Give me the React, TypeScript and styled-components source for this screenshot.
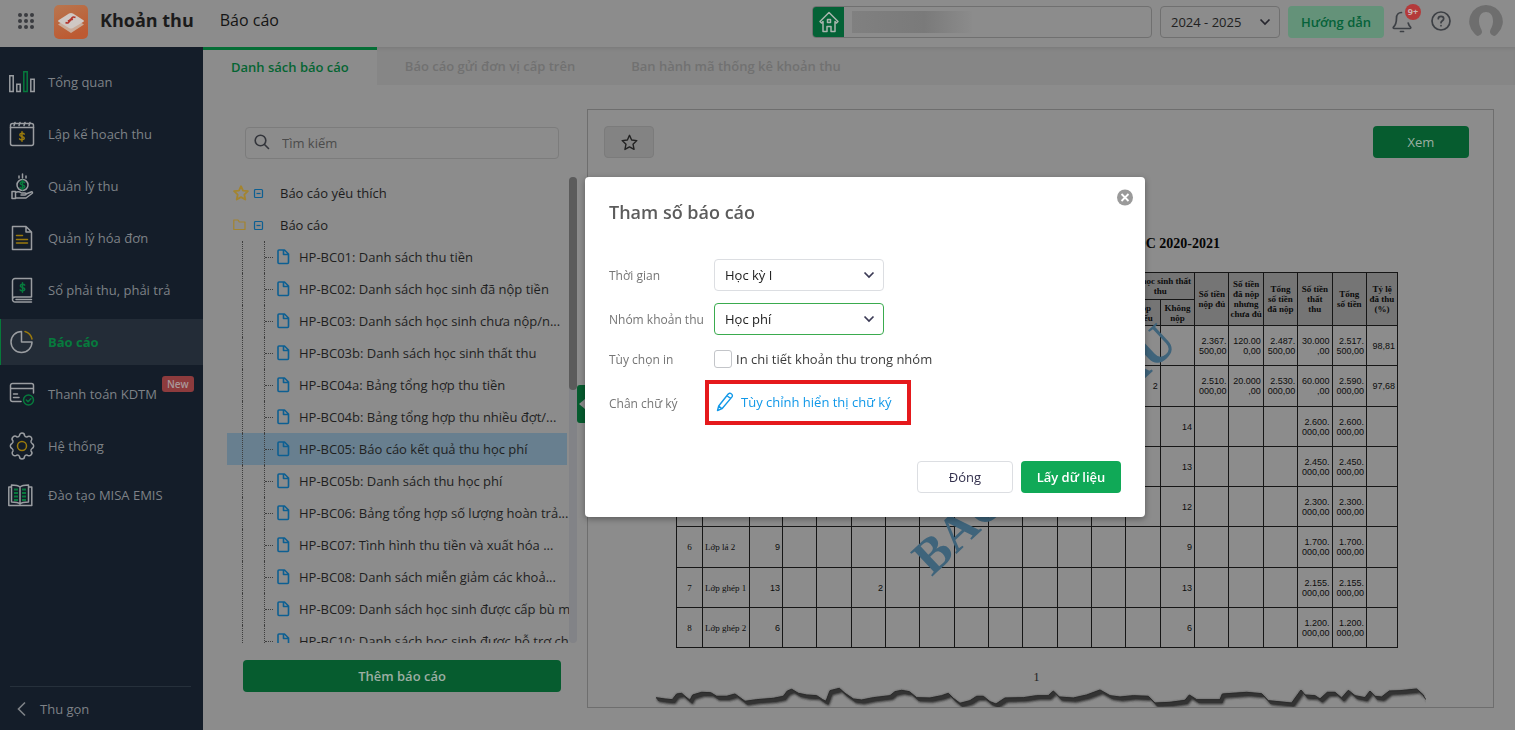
import React from "react";
import styled, { createGlobalStyle, css } from "styled-components";

const GlobalStyle = createGlobalStyle`
  *, *::before, *::after { box-sizing: border-box; }
  body {
    margin: 0;
    background: #8c8c8c;
    font-family: "Open Sans", "Noto Sans", sans-serif;
    font-size: 13px;
    line-height: 20px;
    color: #1c1c1c;
  }
  button, input, select { font: inherit; color: inherit; }
  button { cursor: pointer; }
  ul { list-style: none; margin: 0; padding: 0; }
  svg { display: block; flex: none; }
`;

const Shell = styled.div`
  display: flex;
  flex-direction: column;
  height: 100vh;
  min-height: 640px;
`;

/* ---------- top bar ---------- */

const TopBar = styled.header`
  display: flex;
  align-items: center;
  flex: none;
  height: 47px;
  padding: 0 12px 4px 18px;
  background: #8c8c8c;
`;

const AppsButton = styled.button`
  display: flex;
  padding: 0 0 2px;
  border: 0;
  background: none;
  color: #3a3c40;
  margin-right: 20px;
`;

const AppName = styled.strong`
  margin-left: 12px;
  padding-bottom: 3px;
  font-size: 18px;
  font-weight: 700;
  color: #1b1b1b;
`;

const PageName = styled.h1`
  flex: 1;
  margin: 0 0 0 26px;
  padding-bottom: 3px;
  font-size: 16px;
  font-weight: 400;
  color: #141414;
`;

const SchoolBox = styled.div`
  display: flex;
  align-items: center;
  width: 340px;
  height: 32px;
  border: 1px solid #707070;
  border-radius: 4px;
  overflow: hidden;
`;

const SchoolMark = styled.span`
  display: grid;
  place-items: center;
  width: 31px;
  height: 100%;
  background: #046236;
  color: #a9b5ae;
`;

const SchoolName = styled.span`
  width: 120px;
  height: 22px;
  margin-left: 8px;
  background: linear-gradient(90deg, #808080, #7a7a7a 60%, #858585 85%, #8b8b8b);
`;

const SelectWrap = styled.span<{ $width: number }>`
  position: relative;
  display: inline-flex;
  width: ${(p) => p.$width}px;

  svg {
    position: absolute;
    right: 9px;
    top: 11px;
    pointer-events: none;
  }
`;

const SelectBox = styled.select<{ $tone?: "dim" | "plain" | "focus" }>`
  appearance: none;
  width: 100%;
  height: 32px;
  padding: 0 28px 0 10px;
  border-radius: 4px;
  outline: none;
  color: #212121;
  background: ${(p) => (p.$tone === "dim" ? "transparent" : "#fff")};
  border: 1px solid
    ${(p) => (p.$tone === "dim" ? "#707070" : p.$tone === "focus" ? "#3aab4e" : "#dcdee2")};
`;

const YearSelect = styled(SelectWrap)`
  margin-left: 8px;
`;

const GuideButton = styled.button`
  width: 96px;
  height: 32px;
  margin: 0 8px;
  padding: 0;
  border: 0;
  border-radius: 4px;
  background: #649279;
  color: #06623a;
  font-weight: 600;
`;

const IconButton = styled.button`
  position: relative;
  display: flex;
  padding: 0;
  border: 0;
  background: none;
  color: #3d4045;
`;

const HelpButton = styled(IconButton)`
  margin: 0 18px 0 19px;
  padding-bottom: 2px;
`;

const Count = styled.span`
  position: absolute;
  top: -7px;
  left: 13px;
  width: 16px;
  height: 16px;
  border-radius: 50%;
  background: #b43a3a;
  color: #c9b4b4;
  font-size: 9px;
  font-weight: 700;
  line-height: 16px;
  text-align: center;
`;

/* ---------- side bar ---------- */

const Body = styled.div`
  display: flex;
  flex: 1;
  min-height: 0;
`;

const SideBar = styled.nav`
  display: flex;
  flex-direction: column;
  flex: none;
  width: 203px;
  background: #141d29;
`;

const MenuList = styled.ul`
  display: flex;
  flex-direction: column;
  gap: 6px;
  flex: 1;
  padding-top: 12px;
`;

const MenuLink = styled.a<{ $active?: boolean; $short?: boolean }>`
  display: flex;
  align-items: center;
  gap: 12px;
  height: ${(p) => (p.$short ? 40 : 46)}px;
  padding-left: 7px;
  border-left: 1px solid transparent;
  color: #7e8287;
  text-decoration: none;
  ${(p) =>
    p.$active &&
    css`
      background: #232c37;
      border-left-color: #067a3a;
      color: #077a3d;
      font-weight: 700;
    `}
`;

const NewTag = styled.span`
  align-self: flex-start;
  margin: 5px 0 0 -7px;
  padding: 0 5px;
  border-radius: 3px;
  background: #8d3b3d;
  color: #a9989a;
  font-size: 10px;
  font-weight: 600;
  line-height: 16px;
`;

const Collapse = styled.button`
  display: flex;
  align-items: center;
  gap: 10px;
  height: 44px;
  margin: 0 12px 0 10px;
  padding: 0 0 0 4px;
  border: 0;
  border-top: 1px solid #26303b;
  background: none;
  color: #7e8287;
  text-align: left;
`;

/* ---------- main ---------- */

const Main = styled.main`
  display: flex;
  flex-direction: column;
  flex: 1;
  min-width: 0;
`;

const Tabs = styled.div`
  display: flex;
  flex: none;
  height: 38px;
  background: #868686;
  box-shadow: inset 0 3px 3px -1px #7d7d7d;
`;

const Tab = styled.button<{ $active?: boolean }>`
  padding: 0 28px ${(p) => (p.$active ? 2 : 4)}px;
  border: 0;
  border-top: 3px solid ${(p) => (p.$active ? "#056e36" : "transparent")};
  background: ${(p) => (p.$active ? "#8c8c8c" : "none")};
  color: ${(p) => (p.$active ? "#056533" : "#717171")};
  font-weight: 600;
`;

const Content = styled.div`
  display: flex;
  flex: 1;
  min-height: 0;
  padding-right: 21px;
`;

const ReportNav = styled.section`
  position: relative;
  display: flex;
  flex-direction: column;
  flex: none;
  width: 384px;
  padding: 42px 10px 38px 24px;
`;

const Search = styled.label`
  display: flex;
  align-items: center;
  flex: none;
  gap: 10px;
  height: 32px;
  margin: 0 18px 18px;
  padding-left: 8px;
  border: 1px solid #7c7c7c;
  border-radius: 4px;
  color: #33353b;

  input {
    flex: 1;
    min-width: 0;
    border: 0;
    outline: none;
    background: none;
  }
  input::placeholder { color: #4b4b4b; opacity: 1; }
`;

const TreeScroll = styled.div`
  display: flex;
  flex: 1;
  min-height: 0;
`;

const TreeList = styled.ul`
  flex: 1;
  min-width: 0;
  overflow: hidden;
`;

const ScrollTrack = styled.div`
  width: 8px;
  background: #828387;
  border-radius: 4px;
`;

const ScrollThumb = styled.div`
  height: 213px;
  border-radius: 4px;
  background: #5b5b5b;
`;

const GroupRow = styled.li`
  display: flex;
  align-items: center;
  height: 32px;
  padding-left: 6px;

  svg + svg { margin: 0 16px 0 4px; }
`;

const ReportRow = styled.li<{ $selected?: boolean }>`
  display: flex;
  align-items: center;
  height: 32px;
  margin-right: 2px;
  padding-left: 15px;
  white-space: nowrap;
  background: ${(p) => (p.$selected ? "#687f8f" : "none")};
`;

const Guide = styled.span`
  flex: none;
  width: 22px;
  height: 32px;
  border-left: 1px dotted #3e3e3e;
`;

const Branch = styled(Guide)`
  display: flex;
  align-items: center;
  width: 13px;

  &::after {
    content: "";
    width: 8px;
    border-top: 1px dotted #3e3e3e;
  }
`;

const ReportLink = styled.a`
  margin-left: 9px;
  color: #1f1f1f;
  text-decoration: none;
`;

const GreenButton = styled.button<{ $width?: number; $bright?: boolean; $strong?: boolean }>`
  flex: none;
  width: ${(p) => (p.$width ? `${p.$width}px` : "auto")};
  height: 32px;
  padding: 0;
  border: 0;
  border-radius: 4px;
  background: ${(p) => (p.$bright ? "#10a957" : "#065c2f")};
  color: ${(p) => (p.$bright ? "#fff" : "#9caea3")};
  font-weight: ${(p) => (p.$strong ? 600 : 400)};
`;

const AddReport = styled(GreenButton)`
  margin: 17px 16px 0;
`;

const PanelToggle = styled.button`
  position: absolute;
  top: 300px;
  right: 0;
  display: grid;
  place-items: center;
  width: 10px;
  height: 38px;
  padding: 0;
  border: 0;
  border-radius: 3px 0 0 3px;
  background: #065c2f;
  color: #8c8c8c;
`;

/* ---------- report preview ---------- */

const Preview = styled.section`
  display: flex;
  flex-direction: column;
  flex: 1;
  min-width: 0;
  margin: 24px 0 22px;
  border: 1px solid #6e6e6e;
  overflow: hidden;
`;

const PreviewBar = styled.div`
  display: flex;
  justify-content: space-between;
  padding: 16px 24px 0 16px;
`;

const StarButton = styled.button`
  display: grid;
  place-items: center;
  width: 50px;
  height: 32px;
  padding: 0;
  border: 1px solid #7b7b7b;
  border-radius: 4px;
  background: #838383;
  color: #222;
`;

const Sheet = styled.div`
  display: flex;
  flex-direction: column;
  flex: 1;
  width: 771px;
  margin: 76px auto 0;
`;

const SheetTitle = styled.h2`
  width: 565px;
  margin: 0 0 18px;
  font-family: "Liberation Serif", serif;
  font-size: 14px;
  font-weight: 700;
  text-align: right;
  color: #050505;
`;

const TableArea = styled.div`
  position: relative;
  margin-left: 21px;
  width: 722px;
`;

const Table = styled.table`
  width: 722px;
  table-layout: fixed;
  border-collapse: collapse;
  color: #0c0c0c;
  font-size: 9px;
  line-height: 10px;

  th, td {
    padding: 0 2px;
    border: 1px solid #161616;
  }
  th {
    padding: 0;
    background: #757575;
    font-family: "Liberation Serif", serif;
    font-weight: 700;
  }
  thead tr { height: 26px; }
  thead tr:first-child { height: 27px; }
  tbody tr { height: 40px; }
  tbody tr:nth-child(4n + 2) { height: 41px; }
`;

const NumCell = styled.td`
  font-family: "Liberation Sans", sans-serif;
  text-align: right;
`;

const SerifCell = styled.td<{ $center?: boolean }>`
  font-family: "Liberation Serif", serif;
  text-align: ${(p) => (p.$center ? "center" : "left")};
  white-space: nowrap;
`;

const Watermark = styled.span`
  position: absolute;
  left: 51%;
  top: 47%;
  transform: translate(-50%, -50%) rotate(-43deg);
  font-family: "Liberation Serif", serif;
  font-size: 50px;
  font-weight: 700;
  line-height: 50px;
  white-space: nowrap;
  color: #3f647b;
`;

const PageNumber = styled.p`
  margin: auto 0 0;
  padding-right: 8px;
  font-family: "Liberation Serif", serif;
  font-size: 12px;
  line-height: 16px;
  text-align: center;
`;

/* ---------- dialog ---------- */

const DialogLayer = styled.div`
  position: fixed;
  inset: 0;
  display: flex;
  justify-content: center;
  align-items: flex-start;
  padding: 177px 0 0 215px;
`;

const Dialog = styled.div`
  position: relative;
  width: 560px;
  padding: 24px;
  border-radius: 4px;
  background: #fff;
  box-shadow: 0 2px 6px rgba(0, 0, 0, 0.35);
`;

const DialogTitle = styled.h2`
  margin: 0 0 36px;
  font-size: 18px;
  font-weight: 600;
  line-height: 22px;
  color: #5c5c5c;
`;

const CloseButton = styled.button`
  position: absolute;
  top: 12px;
  right: 12px;
  padding: 0;
  border: 0;
  background: none;
`;

const Form = styled.form`
  display: flex;
  flex-direction: column;
  gap: 12px;
`;

const Field = styled.div<{ $height: number }>`
  display: flex;
  align-items: center;
  height: ${(p) => p.$height}px;
`;

const FieldLabel = styled.label`
  flex: none;
  width: 105px;
  padding-top: 2px;
  font-size: 12px;
  color: #757575;
`;

const CheckLabel = styled.label`
  display: flex;
  align-items: center;
  gap: 4px;
  color: #3c3c3c;

  input {
    appearance: none;
    width: 18px;
    height: 18px;
    margin: 0;
    border: 1px solid #c3c5c9;
    border-radius: 3px;
    background: #fff;
  }
`;

const SignatureLink = styled.a`
  display: flex;
  align-items: center;
  gap: 7px;
  height: 45px;
  margin-left: -9px;
  padding: 0 15px 2px 7px;
  border: 4px solid #e5191c;
  color: #1198e8;
  text-decoration: none;
`;

const DialogFooter = styled.div`
  display: flex;
  justify-content: flex-end;
  gap: 8px;
  margin-top: 39px;
`;

const PlainButton = styled.button`
  width: 96px;
  height: 32px;
  padding: 0;
  border: 1px solid #dcdee2;
  border-radius: 4px;
  background: #fff;
  color: #33304d;
`;

/* ---------- icons ---------- */

const Chevron = ({ color = "#3b3a55" }: { color?: string }) => (
  <svg width="12" height="10" viewBox="0 0 12 10" fill="none" stroke={color} strokeWidth="1.700">
    <path d="M1.500 2.500 6 7l4.500-4.500" />
  </svg>
);

const LINE = "#9a9da1";
const GREEN = "#077a3d";
const GOLD = "#9a7a0c";

const MenuIcon = ({ children }: { children: React.ReactNode }) => (
  <svg width="28" height="28" viewBox="0 0 28 28" fill="none" stroke={LINE} strokeWidth="1.500" strokeLinecap="round" strokeLinejoin="round">
    {children}
  </svg>
);

const Coin = ({ x, y, color }: { x: number; y: number; color: string }) => (
  <path
    transform={`translate(${x} ${y})`}
    stroke={color}
    d="M2.200-2.300C1.500-3.600-2.200-3.500-2.200-1.600-2.200.3 2.300-.3 2.300 1.700 2.300 3.600-1.700 3.700-2.400 2.300M0-4.700V4.700"
  />
);

const icons = {
  overview: (
    <MenuIcon>
      <path strokeLinejoin="miter" d="M1.800 7.800h3.400v15.700H1.800zM8.800 16.300h3.400v7.200H8.800zM22.800 11.300h3.400v12.200h-3.400z" />
      <path stroke={GREEN} strokeLinejoin="miter" d="M15.800 3.800h3.400v19.700h-3.400z" />
    </MenuIcon>
  ),
  plan: (
    <MenuIcon>
      <rect x="2.500" y="3.500" width="23" height="22" rx="2" />
      <path d="M2.500 7.500h23M7 2.500l-1 3M12 2.500l-1 3M17 2.500l-1 3M22 2.500l-1 3" />
      <Coin x={14} y={16.500} color={GOLD} />
    </MenuIcon>
  ),
  collect: (
    <MenuIcon>
      <circle cx="14.500" cy="13" r="5.500" />
      <Coin x={14.500} y={13} color={GREEN} />
      <path d="M11 4v2M14.500 2v4M18 4v2M4 19.500h3.500v7H4zM7.500 20.500c3-1.500 4.500-.5 6 .5h3.500c1.500 0 1.500 2 0 2h-4M18 22l5-2c1.500-.5 2 .7 1 1.500L18 26H7.500" />
    </MenuIcon>
  ),
  invoice: (
    <MenuIcon>
      <path d="M4.500 2.500H18l5.500 5.500v17.500h-19zM18 2.500V8h5.500" />
      <path stroke={GOLD} d="M8.500 11.500h6M8.500 15.500h11M8.500 19h11" />
    </MenuIcon>
  ),
  ledger: (
    <MenuIcon>
      <path d="M4.500 22.500V5a2.500 2.500 0 0 1 2.500-2.500h16.500V21H7a2.500 2.500 0 0 0 0 5h16.500M8 23.500h15.500" />
      <Coin x={14.500} y={11.500} color={GREEN} />
    </MenuIcon>
  ),
  report: (
    <MenuIcon>
      <path d="M13.500 3.500A10.500 10.500 0 1 0 24 14H13.500z" />
      <path stroke={GOLD} d="M17 3.500A10 10 0 0 1 24 11" />
    </MenuIcon>
  ),
  payment: (
    <MenuIcon>
      <path d="M13 21.500H4.500a2 2 0 0 1-2-2v-14a2 2 0 0 1 2-2h19a2 2 0 0 1 2 2V13M2.500 8.500h23M5.500 14h4M5.500 17.500h5.500" />
      <circle cx="20.500" cy="20" r="5" stroke={GREEN} />
      <path stroke={GREEN} d="m18.300 20 1.700 1.700 2.900-2.900" />
    </MenuIcon>
  ),
  system: (
    <MenuIcon>
      <path d="M11.500 3.500a2.500 2.500 0 0 1 5 0 2.500 2.500 0 0 0 2.500 1.500 2.800 2.800 0 0 1 4 4 2.500 2.500 0 0 0 1 2.500 2.700 2.700 0 0 1 0 5 2.500 2.500 0 0 0-1 2.500 2.800 2.800 0 0 1-4 4 2.500 2.500 0 0 0-2.500 1.500 2.500 2.500 0 0 1-5 0A2.500 2.500 0 0 0 9 23a2.800 2.800 0 0 1-4-4 2.500 2.500 0 0 0-1-2.500 2.700 2.700 0 0 1 0-5A2.500 2.500 0 0 0 5 9a2.800 2.800 0 0 1 4-4 2.500 2.500 0 0 0 2.500-1.500z" />
      <circle cx="14" cy="14" r="4.500" stroke={GOLD} />
    </MenuIcon>
  ),
  training: (
    <MenuIcon>
      <path d="M12 6C10 4.200 6 4 3.500 4v17c3 0 6.500 0 8.500 2 2-2 5.500-2 8.500-2V4c-2.500 0-6.500.2-8.500 2zM12 6v17M3.500 6H.8v18.500h23V6h-3.300" />
      <path stroke={GREEN} strokeLinecap="butt" strokeWidth="2" d="M6 8.500h4M6 12h4M6 15.500h4M6 19h4M14 8.500h4M14 12h4M14 15.500h4M14 19h4" />
    </MenuIcon>
  ),
};

const AppsGrid = () => (
  <svg width="16" height="16" viewBox="0 0 16 16" fill="currentColor">
    {[2, 8, 14].map((y) => [2, 8, 14].map((x) => <circle key={`${x}-${y}`} cx={x} cy={y} r="2" />))}
  </svg>
);

const Logo = () => (
  <svg width="34" height="34" viewBox="0 0 34 34">
    <defs>
      <linearGradient id="logo" x1="0" y1="0" x2="0.400" y2="1">
        <stop offset="0" stopColor="#b8764f" />
        <stop offset="1" stopColor="#bd5a32" />
      </linearGradient>
    </defs>
    <rect width="34" height="34" rx="5" fill="url(#logo)" />
    <path d="M4 19.500 17 28l13-8.500-4-2.500H8z" fill="#c9ab99" />
    <path d="M4.500 15.200 15 8.500q2-1 4 0l10.500 6.700q1 .8 0 1.600L19 23q-2 1-4 0L4.500 16.800q-1-.8 0-1.600z" fill="#cfc8c4" />
    <path d="M11.500 17.500c2.500 1.200 3.500 0 4-1.500s1.500-2.500 3.500-1.500M21.500 12.500c-2.500-1.200-3.800 0-4.200 1.500s-1.500 2.500-3.500 1.500" fill="none" stroke="#b3342c" strokeWidth="1.600" />
  </svg>
);

const House = () => (
  <svg width="22" height="22" viewBox="0 0 22 22" fill="none" stroke="currentColor" strokeWidth="1.500" strokeLinejoin="round">
    <path d="M11 1.500 2 10.500l1.500 1.500L5 10.500v10h4v-5h4v5h4v-10l1.500 1.500 1.500-1.500z" />
    <rect x="9.500" y="8.500" width="3" height="3" />
  </svg>
);

const Bell = () => (
  <svg width="20" height="22" viewBox="0 0 20 22" fill="none" stroke="currentColor" strokeWidth="1.700" strokeLinecap="round" strokeLinejoin="round">
    <path d="M9.500 1.500C6.500 1.500 4.500 4 4.500 7c0 5.500-1.300 7.500-3 9-.5.500-.3 1.500.7 1.500h15.600c1 0 1.200-1 .7-1.500-1-1-1.800-2-2.300-4" />
    <path d="M8.500 20.500h3" />
  </svg>
);

const Help = () => (
  <svg width="20" height="20" viewBox="0 0 20 20" fill="none" stroke="currentColor" strokeWidth="1.700" strokeLinecap="round">
    <circle cx="10" cy="10" r="9" />
    <path d="M7.300 7.700C7.300 4.500 12.700 4.500 12.700 7.700c0 2-2.700 2-2.700 4M10 14.600v.1" />
  </svg>
);

const Avatar = () => (
  <svg width="34" height="34" viewBox="0 0 34 34" fill="#6e6e6e">
    <path d="M17 0a17 16.500 0 0 0-12 28c1.500 1.800 2.500 2.800 4 3 2-1 4-2 4-4 0-3-3-5-3-11 0-6 3-9 7-9s7 3 7 9c0 6-3 8-3 11 0 2 2 3 4 4 1.500-.2 2.500-1.200 4-3A17 16.500 0 0 0 17 0z" />
  </svg>
);

const SearchIcon = () => (
  <svg width="16" height="18" viewBox="0 0 16 18" fill="none" stroke="currentColor" strokeWidth="1.600" strokeLinecap="round">
    <circle cx="6.500" cy="6.500" r="5.300" />
    <path d="m10.500 10.500 4 4" />
  </svg>
);

const Star = ({ size, color, weight = 1.5 }: { size: number; color: string; weight?: number }) => (
  <svg width={size} height={size} viewBox="0 0 16 16" fill="none" stroke={color} strokeWidth={weight} strokeLinejoin="round">
    <path d="m8 1.200 2 4.500 4.900.5-3.600 3.400 1 4.900L8 12.100l-4.300 2.400 1-4.900-3.600-3.400 4.900-.5z" />
  </svg>
);

const Folder = () => (
  <svg width="16" height="14" viewBox="0 0 16 14" fill="none" stroke="#a3842f" strokeWidth="1.200" strokeLinejoin="round">
    <path d="M.8 2h4.200l1.300 2H12v7.500H.8z" />
  </svg>
);

const Minus = () => (
  <svg width="11" height="11" viewBox="0 0 11 11" fill="none" stroke="#0d5f92" strokeWidth="1.200">
    <rect x="1.500" y="1.500" width="8" height="8" rx="1" />
    <path d="M3.500 5.500h4" />
  </svg>
);

const FileIcon = () => (
  <svg width="13" height="16" viewBox="0 0 13 16" fill="none" stroke="#0d5f92" strokeWidth="1.600" strokeLinejoin="round">
    <path d="M1 2q0-1 1-1h5.500l4 4v8.500q0 1-1 1H2q-1 0-1-1zM6.500 1v4.500h5" />
  </svg>
);

const Pencil = () => (
  <svg width="18" height="20" viewBox="0 0 18 20" fill="none" stroke="currentColor" strokeWidth="1.400" strokeLinejoin="round">
    <path d="M1.500 18.500 2.700 14 12 2.300c1-1.300 2.300-1.300 3.300-.5 1.200.9 1.500 2 .5 3.300L6 16.700zM11 3.700l4 3M2.700 14 6 16.700" />
  </svg>
);

const CloseIcon = () => (
  <svg width="16" height="17" viewBox="0 0 16 17">
    <circle cx="8" cy="8.500" r="8" fill="#9a9a9a" />
    <path d="m4.500 5 7 7m0-7-7 7" stroke="#fff" strokeWidth="1.800" />
  </svg>
);

/* Outline of the torn lower border of the sheet. */
const tear: [number, number][] = [
  [48, 596], [75, 600], [97, 602], [110, 585], [125, 583], [135, 592], [150, 604], [158, 588], [185, 580],
  [212, 581], [230, 592], [260, 592], [285, 585], [300, 596], [315, 607], [350, 602], [400, 598], [430, 592],
  [442, 576], [455, 571], [475, 583], [500, 588], [530, 590], [548, 602], [558, 607], [570, 575], [598, 568],
  [615, 583], [640, 600], [665, 603], [700, 596], [750, 590], [765, 578], [785, 574], [808, 578], [830, 596],
  [870, 597], [905, 590], [925, 583], [940, 598], [960, 613], [990, 605], [1010, 592], [1030, 592], [1050, 608],
  [1068, 615], [1095, 597], [1150, 596], [1190, 590], [1225, 590], [1240, 576], [1258, 594], [1300, 597],
  [1340, 588], [1380, 573], [1410, 590], [1440, 594], [1480, 590], [1525, 592], [1545, 612], [1590, 610],
  [1635, 604], [1648, 588], [1670, 602], [1740, 602], [1747, 585], [1820, 580], [1865, 584], [1885, 605],
  [1955, 612], [1983, 573], [1995, 588], [2025, 590], [2040, 600], [2062, 580], [2085, 580], [2105, 597],
  [2125, 574], [2145, 590], [2175, 596], [2190, 576], [2205, 592], [2225, 594], [2248, 576], [2280, 575],
  [2330, 570], [2350, 588], [2354, 598],
];

/* The shadow falls down and to the right, one slanted quad per edge segment. */
const shadow = (dx: number, dy: number) =>
  tear
    .slice(1)
    .map(([x, y], i) => {
      const [px, py] = tear[i];
      return `M${px} ${py}L${x} ${y}L${x + dx} ${y + dy}L${px + dx} ${py + dy}Z`;
    })
    .join("");

const TornEdge = () => (
  <svg width="771" height="22" viewBox="45 558 2313 66">
    <defs>
      <filter id="soft" x="-1%" y="-20%" width="102%" height="140%">
        <feGaussianBlur stdDeviation="2.500" />
      </filter>
    </defs>
    <path d={shadow(9, 14)} fill="#333" filter="url(#soft)" />
    <path d={shadow(7, 10)} fill="#333" />
    <polyline points={tear.map(([x, y]) => `${x},${y}`).join(" ")} fill="none" stroke="#2a2a2a" strokeWidth="3" />
  </svg>
);

/* ---------- data ---------- */

const menu: { label: string; icon: React.ReactNode; active?: boolean; tag?: string; short?: boolean }[] = [
  { label: "Tổng quan", icon: icons.overview },
  { label: "Lập kế hoạch thu", icon: icons.plan },
  { label: "Quản lý thu", icon: icons.collect },
  { label: "Quản lý hóa đơn", icon: icons.invoice },
  { label: "Sổ phải thu, phải trả", icon: icons.ledger },
  { label: "Báo cáo", icon: icons.report, active: true },
  { label: "Thanh toán KDTM", icon: icons.payment, tag: "New" },
  { label: "Hệ thống", icon: icons.system },
  { label: "Đào tạo MISA EMIS", icon: icons.training, short: true },
];

const reports = [
  "HP-BC01: Danh sách thu tiền",
  "HP-BC02: Danh sách học sinh đã nộp tiền",
  "HP-BC03: Danh sách học sinh chưa nộp/n...",
  "HP-BC03b: Danh sách học sinh thất thu",
  "HP-BC04a: Bảng tổng hợp thu tiền",
  "HP-BC04b: Bảng tổng hợp thu nhiều đợt/...",
  "HP-BC05: Báo cáo kết quả thu học phí",
  "HP-BC05b: Danh sách thu học phí",
  "HP-BC06: Bảng tổng hợp số lượng hoàn trả...",
  "HP-BC07: Tình hình thu tiền và xuất hóa ...",
  "HP-BC08: Danh sách miễn giảm các khoả...",
  "HP-BC09: Danh sách học sinh được cấp bù m",
  "HP-BC10: Danh sách học sinh được hỗ trợ ch",
];

/* Cells by column index; two-line amounts are split at the slash. */
const rows: Record<number, string>[] = [
  { 15: "2.367./500,00", 16: "120.00/0,00", 17: "2.487./500,00", 18: "30.000/,00", 19: "2.517./500,00", 20: "98,81" },
  { 13: "2", 15: "2.510./000,00", 16: "20.000/,00", 17: "2.530./000,00", 18: "60.000/,00", 19: "2.590./000,00", 20: "97,68" },
  { 14: "14", 18: "2.600./000,00", 19: "2.600./000,00" },
  { 14: "13", 18: "2.450./000,00", 19: "2.450./000,00" },
  { 14: "12", 18: "2.300./000,00", 19: "2.300./000,00" },
  { 0: "6", 1: "Lớp lá 2", 2: "9", 14: "9", 18: "1.700./000,00", 19: "1.700./000,00" },
  { 0: "7", 1: "Lớp ghép 1", 2: "13", 5: "2", 14: "13", 18: "2.155./000,00", 19: "2.155./000,00" },
  { 0: "8", 1: "Lớp ghép 2", 2: "6", 14: "6", 18: "1.200./000,00", 19: "1.200./000,00" },
];

const tailHeads = [
  "Số tiền/nộp đủ",
  "Số tiền/đã nộp/nhưng/chưa đủ",
  "Tổng/số tiền/đã nộp",
  "Số tiền/thất/thu",
  "Tổng/số tiền",
  "Tỷ lệ/đã thu/(%)",
];

const columns = Array.from({ length: 21 }, (_, i) => i);
const fixedWidths: Record<number, number> = { 0: 26, 1: 47, 2: 33, 20: 31 };

const Lines = ({ text }: { text: string }) => (
  <>
    {text.split("/").map((line, i) => (
      <React.Fragment key={i}>
        {i > 0 && <br />}
        {line}
      </React.Fragment>
    ))}
  </>
);

const ReportTable = () => (
  <Table>
    <colgroup>
      {columns.map((c) => (
        <col key={c} width={fixedWidths[c]} />
      ))}
    </colgroup>
    <thead>
      <tr>
        {columns.slice(0, 13).map((c) => (
          <th key={c} rowSpan={2} />
        ))}
        <th colSpan={2}><Lines text="Số học sinh thất/thu" /></th>
        {tailHeads.map((h) => (
          <th key={h} rowSpan={2}>
            <Lines text={h} />
          </th>
        ))}
      </tr>
      <tr>
        <th><Lines text="Nộp/thiếu" /></th>
        <th><Lines text="Không/nộp" /></th>
      </tr>
    </thead>
    <tbody>
      {rows.map((row, r) => (
        <tr key={r}>
          {columns.map((c) => {
            const text = row[c] ?? "";
            return c < 2 ? (
              <SerifCell key={c} $center={c === 0}>{text}</SerifCell>
            ) : (
              <NumCell key={c}><Lines text={text} /></NumCell>
            );
          })}
        </tr>
      ))}
    </tbody>
  </Table>
);

export default function App() {
  return (
    <>
      <GlobalStyle />
      <Shell>
        <TopBar>
          <AppsButton aria-label="Ứng dụng"><AppsGrid /></AppsButton>
          <Logo />
          <AppName>Khoản thu</AppName>
          <PageName>Báo cáo</PageName>
          <SchoolBox>
            <SchoolMark><House /></SchoolMark>
            <SchoolName />
          </SchoolBox>
          <YearSelect $width={120}>
            <SelectBox $tone="dim" aria-label="Năm học" defaultValue="2024 - 2025">
              <option>2024 - 2025</option>
            </SelectBox>
            <Chevron color="#26262e" />
          </YearSelect>
          <GuideButton>Hướng dẫn</GuideButton>
          <IconButton aria-label="Thông báo">
            <Bell />
            <Count>9+</Count>
          </IconButton>
          <HelpButton aria-label="Trợ giúp"><Help /></HelpButton>
          <IconButton aria-label="Tài khoản"><Avatar /></IconButton>
        </TopBar>

        <Body>
          <SideBar>
            <MenuList>
              {menu.map((m) => (
                <li key={m.label}>
                  <MenuLink href="#" $active={m.active} $short={m.short}>
                    {m.icon}
                    <span>{m.label}</span>
                    {m.tag && <NewTag>{m.tag}</NewTag>}
                  </MenuLink>
                </li>
              ))}
            </MenuList>
            <Collapse>
              <svg width="16" height="16" viewBox="0 0 16 16" fill="none" stroke="currentColor" strokeWidth="1.600">
                <path d="m11 1.500-6.500 6.500 6.500 6.500" />
              </svg>
              Thu gọn
            </Collapse>
          </SideBar>

          <Main>
            <Tabs>
              <Tab $active>Danh sách báo cáo</Tab>
              <Tab>Báo cáo gửi đơn vị cấp trên</Tab>
              <Tab>Ban hành mã thống kê khoản thu</Tab>
            </Tabs>
            <Content>
              <ReportNav>
                <Search>
                  <SearchIcon />
                  <input type="text" placeholder="Tìm kiếm" />
                </Search>
                <TreeScroll>
                  <TreeList>
                    <GroupRow>
                      <Star size={16} color="#a3842f" weight={1.8} />
                      <Minus />
                      Báo cáo yêu thích
                    </GroupRow>
                    <GroupRow>
                      <Folder />
                      <Minus />
                      Báo cáo
                    </GroupRow>
                    {reports.map((r) => (
                      <ReportRow key={r} $selected={r.startsWith("HP-BC05:")}>
                        <Guide />
                        <Branch />
                        <FileIcon />
                        <ReportLink href="#">{r}</ReportLink>
                      </ReportRow>
                    ))}
                  </TreeList>
                  <ScrollTrack><ScrollThumb /></ScrollTrack>
                </TreeScroll>
                <AddReport $strong>Thêm báo cáo</AddReport>
                <PanelToggle aria-label="Thu gọn danh sách">
                  <svg width="8" height="10" viewBox="0 0 8 10" fill="currentColor"><path d="M7 0v10L1 5z" /></svg>
                </PanelToggle>
              </ReportNav>

              <Preview>
                <PreviewBar>
                  <StarButton aria-label="Yêu thích"><Star size={17} color="#222" weight={1.3} /></StarButton>
                  <GreenButton $width={96}>Xem</GreenButton>
                </PreviewBar>
                <Sheet>
                  <SheetTitle>HỌC 2020-2021</SheetTitle>
                  <TableArea>
                    <ReportTable />
                    <Watermark>BAOCAOMAU</Watermark>
                  </TableArea>
                  <PageNumber>1</PageNumber>
                  <TornEdge />
                </Sheet>
              </Preview>
            </Content>
          </Main>
        </Body>
      </Shell>

      <DialogLayer>
        <Dialog role="dialog" aria-labelledby="dialog-title">
          <CloseButton aria-label="Đóng"><CloseIcon /></CloseButton>
          <DialogTitle id="dialog-title">Tham số báo cáo</DialogTitle>
          <Form>
            <Field $height={32}>
              <FieldLabel htmlFor="period">Thời gian</FieldLabel>
              <SelectWrap $width={170}>
                <SelectBox id="period" defaultValue="Học kỳ I"><option>Học kỳ I</option></SelectBox>
                <Chevron />
              </SelectWrap>
            </Field>
            <Field $height={32}>
              <FieldLabel htmlFor="group">Nhóm khoản thu</FieldLabel>
              <SelectWrap $width={170}>
                <SelectBox id="group" $tone="focus" defaultValue="Học phí"><option>Học phí</option></SelectBox>
                <Chevron />
              </SelectWrap>
            </Field>
            <Field $height={24}>
              <FieldLabel htmlFor="detail">Tùy chọn in</FieldLabel>
              <CheckLabel>
                <input id="detail" type="checkbox" />
                In chi tiết khoản thu trong nhóm
              </CheckLabel>
            </Field>
            <Field $height={39}>
              <FieldLabel as="span">Chân chữ ký</FieldLabel>
              <SignatureLink href="#"><Pencil />Tùy chỉnh hiển thị chữ ký</SignatureLink>
            </Field>
          </Form>
          <DialogFooter>
            <PlainButton>Đóng</PlainButton>
            <GreenButton $width={100} $bright $strong>Lấy dữ liệu</GreenButton>
          </DialogFooter>
        </Dialog>
      </DialogLayer>
    </>
  );
}
